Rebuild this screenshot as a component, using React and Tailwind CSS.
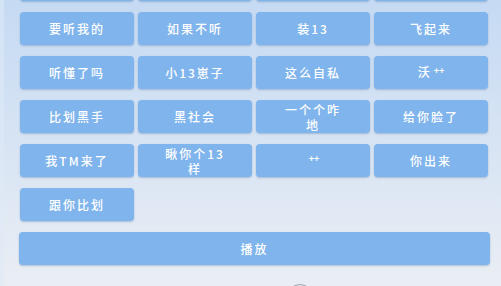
import React from 'react';

const Plus = () => (
    <span className="text-[9px] font-bold tracking-[0px] relative -top-[3px] ml-[2px]">++</span>
);

const rows = [
    ['', '', '', ''],
    ['要听我的', '如果不听', '装13', '飞起来'],
    ['听懂了吗', '小13崽子', '这么自私', <>沃<Plus /></>],
    ['比划黑手', '黑社会', ['一个个咋', '地'], '给你脸了'],
    ['我TM来了', ['瞅你个13', '样'], <Plus />, '你出来'],
    ['跟你比划'],
];

const SoundButton = ({ label }) => (
    <button className="h-[33px] rounded-[4px] bg-[#7fb4ec] shadow-[0_1px_2px_rgba(60,100,150,0.35)] text-white text-[12px] leading-[16px] font-medium tracking-[2px] flex flex-col items-center justify-center">
        {Array.isArray(label)
            ? label.map((line) => <span key={line} className="block h-[15px] leading-[15px]">{line}</span>)
            : <span>{label}</span>}
    </button>
);

export default function App() {
    return (
        <div
            className="w-[501px] h-[286px] overflow-hidden bg-gradient-to-b from-[#c5daf3] to-[#eaeef4] flex"
            style={{ fontFamily: '"Noto Sans CJK SC", "Noto Sans", sans-serif' }}
        >
            {/* left edge strip */}
            <div className="w-[4px] shrink-0 bg-gradient-to-b from-[#d3e3f6] to-[#e4ebf5]" />

            <div className="flex-1 flex flex-col pl-[16px] pr-[11px] -mt-[32px]">
                <div className="shrink-0 grid grid-cols-[114px_114px_114px_114px] gap-x-[4px] gap-y-[11px]">
                    {rows.flat().map((label, i) => (
                        <SoundButton key={i} label={label} />
                    ))}
                </div>

                <button className="shrink-0 mt-[11px] h-[33px] w-[471px] -ml-[1px] rounded-[4px] bg-[#7fb4ec] shadow-[0_1px_2px_rgba(60,100,150,0.35)] text-white text-[12px] font-medium tracking-[2px]">
                    播放
                </button>

                <div className="shrink-0 relative mt-[19px] flex items-start h-[20px]">
                    <span className="text-[12px] text-[#6b7280] ml-[2px]">音频列表</span>
                    <div className="absolute left-[266px] top-0 w-[28px] h-[28px] rounded-full border border-[#9aa3ad]" />
                </div>
            </div>
        </div>
    );
}
